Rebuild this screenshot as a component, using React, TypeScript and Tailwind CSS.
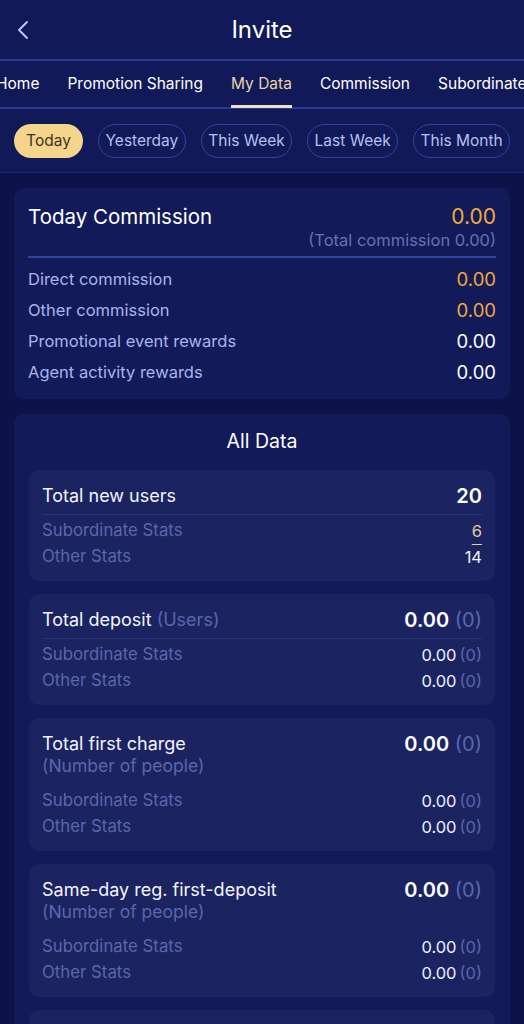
import React from "react";

const font = { fontFamily: "Inter, 'Noto Sans', sans-serif" };

function SubRow({ label, value, count, underline }: { label: string; value: string; count?: string; underline?: boolean }) {
  return (
    <div className="flex items-center justify-between h-[26px]">
      <span className="text-[16.8px] text-[#5a67ad]">{label}</span>
      <span className="text-[16.5px] text-[#eef0ff] flex items-center">
        {underline ? (
          <span className="text-[#e8cf9e] underline underline-offset-[7px] decoration-[#e8cf9e]">{value}</span>
        ) : (
          <span>{value}</span>
        )}
        {count !== undefined && <span className="ml-[3px] text-[#5a67ad]">{count}</span>}
      </span>
    </div>
  );
}

function InnerCard({
  title,
  titleSuffix,
  subtitle,
  value,
  count,
  divider,
  rows,
}: {
  title: string;
  titleSuffix?: string;
  subtitle?: string;
  value: string;
  count?: string;
  divider?: boolean;
  rows: { label: string; value: string; count?: string; underline?: boolean }[];
}) {
  return (
    <div className="rounded-[10px] bg-[#1b2360] px-[13px] pt-[13px] pb-[11px]">
      <div className={`flex justify-between ${divider ? "border-b border-[#28337a] pb-[5px]" : ""}`}>
        <div className="flex flex-col">
          <span className="text-[18px] text-[#f3f4ff] leading-[26px]">
            {title}
            {titleSuffix && <span className="text-[#5a67ad]"> {titleSuffix}</span>}
          </span>
          {subtitle && <span className="text-[17.5px] text-[#5a67ad] leading-[18px]">{subtitle}</span>}
        </div>
        <span className="text-[20px] font-semibold text-white leading-[26px]">
          {value}
          {count !== undefined && <span className="font-normal text-[#5a67ad]"> {count}</span>}
        </span>
      </div>
      <div className={subtitle ? "mt-[13px]" : "mt-[3px]"}>
        {rows.map((r) => (
          <SubRow key={r.label} {...r} />
        ))}
      </div>
    </div>
  );
}

export default function App() {
  const tabs = ["Home", "Promotion Sharing", "My Data", "Commission", "Subordinate"];
  const pills = ["Today", "Yesterday", "This Week", "Last Week", "This Month"];
  const statRows = [
    { label: "Subordinate Stats", value: "0.00", count: "(0)" },
    { label: "Other Stats", value: "0.00", count: "(0)" },
  ];
  return (
    <div style={font} className="w-[524px] min-h-[1024px] bg-[#0d1248] overflow-hidden">
      {/* Header */}
      <div className="bg-[#121958] border-b border-[#1f2a78]">
        <div className="relative h-[61px] flex items-center justify-center border-b-2 border-[#2a3a96]">
          <svg className="absolute left-[16px] top-[20px]" width="14" height="20" viewBox="0 0 14 20" fill="none">
            <path d="M11 2 L3 10 L11 18" stroke="#c5ccf3" strokeWidth="1.8" strokeLinecap="round" strokeLinejoin="round" />
          </svg>
          <span className="text-[24px] text-white">Invite</span>
        </div>
        <div className="h-[48px] flex items-stretch gap-[28px] whitespace-nowrap ml-[-4px] border-b-2 border-[#2a3a96]">
          {tabs.map((t) => (
            <div key={t} className="relative flex items-center">
              <span className={`text-[15.5px] ${t === "My Data" ? "text-[#e8d3a8]" : "text-white"}`}>{t}</span>
              {t === "My Data" && <div className="absolute left-0 right-0 bottom-[-1px] h-[3px] bg-[#efe0c2]" />}
            </div>
          ))}
        </div>
        <div className="flex gap-[15px] px-[14px] pt-[15px] pb-[14px]">
          {pills.map((p, i) => (
            <div
              key={p}
              className={`h-[34px] min-w-[69px] px-[8px] rounded-full flex items-center justify-center text-[15.5px] whitespace-nowrap ${
                i === 0 ? "bg-[#f5d48b] text-[#3a3524]" : "border border-[#33439e] text-[#b6c0f0]"
              }`}
            >
              {p}
            </div>
          ))}
        </div>
      </div>

      <div className="px-[14px] pt-[15px] flex flex-col gap-[15px]">
        {/* Today Commission */}
        <div className="rounded-[10px] bg-[#131a5a] px-[14px] pt-[15px] pb-[11px]">
          <div className="flex justify-between items-start">
            <span className="text-[20.5px] text-white leading-[28px]">Today Commission</span>
            <div className="flex flex-col items-end">
              <span className="text-[21px] text-[#f0aa3c] leading-[28px]">0.00</span>
              <span className="text-[16.5px] text-[#6671b6] leading-[18px]">(Total commission 0.00)</span>
            </div>
          </div>
          <div className="h-[2px] bg-[#2d44a8] mt-[7px] mb-[6px]" />
          {[
            ["Direct commission", "0.00", true],
            ["Other commission", "0.00", true],
            ["Promotional event rewards", "0.00", false],
            ["Agent activity rewards", "0.00", false],
          ].map(([l, v, o]) => (
            <div key={l as string} className="flex justify-between items-center h-[31px]">
              <span className="text-[16.5px] text-[#aab4ec]">{l}</span>
              <span className={`text-[18.5px] ${o ? "text-[#f0aa3c]" : "text-white"}`}>{v}</span>
            </div>
          ))}
        </div>

        {/* All Data */}
        <div className="rounded-[10px] bg-[#131a5a] px-[15px] pt-[12px] pb-[14px]">
          <div className="text-center text-[19.5px] text-white leading-[30px] mb-[14px]">All Data</div>
          <div className="flex flex-col gap-[13px]">
            <InnerCard
              title="Total new users"
              value="20"
              divider
              rows={[
                { label: "Subordinate Stats", value: "6", underline: true },
                { label: "Other Stats", value: "14" },
              ]}
            />
            <InnerCard title="Total deposit" titleSuffix="(Users)" value="0.00" count="(0)" divider rows={statRows} />
            <InnerCard title="Total first charge" subtitle="(Number of people)" value="0.00" count="(0)" rows={statRows} />
            <InnerCard title="Same-day reg. first-deposit" subtitle="(Number of people)" value="0.00" count="(0)" rows={statRows} />
            <InnerCard title="First deposit bonus" value="0.00" count="(0)" rows={statRows} />
          </div>
        </div>
      </div>
    </div>
  );
}
